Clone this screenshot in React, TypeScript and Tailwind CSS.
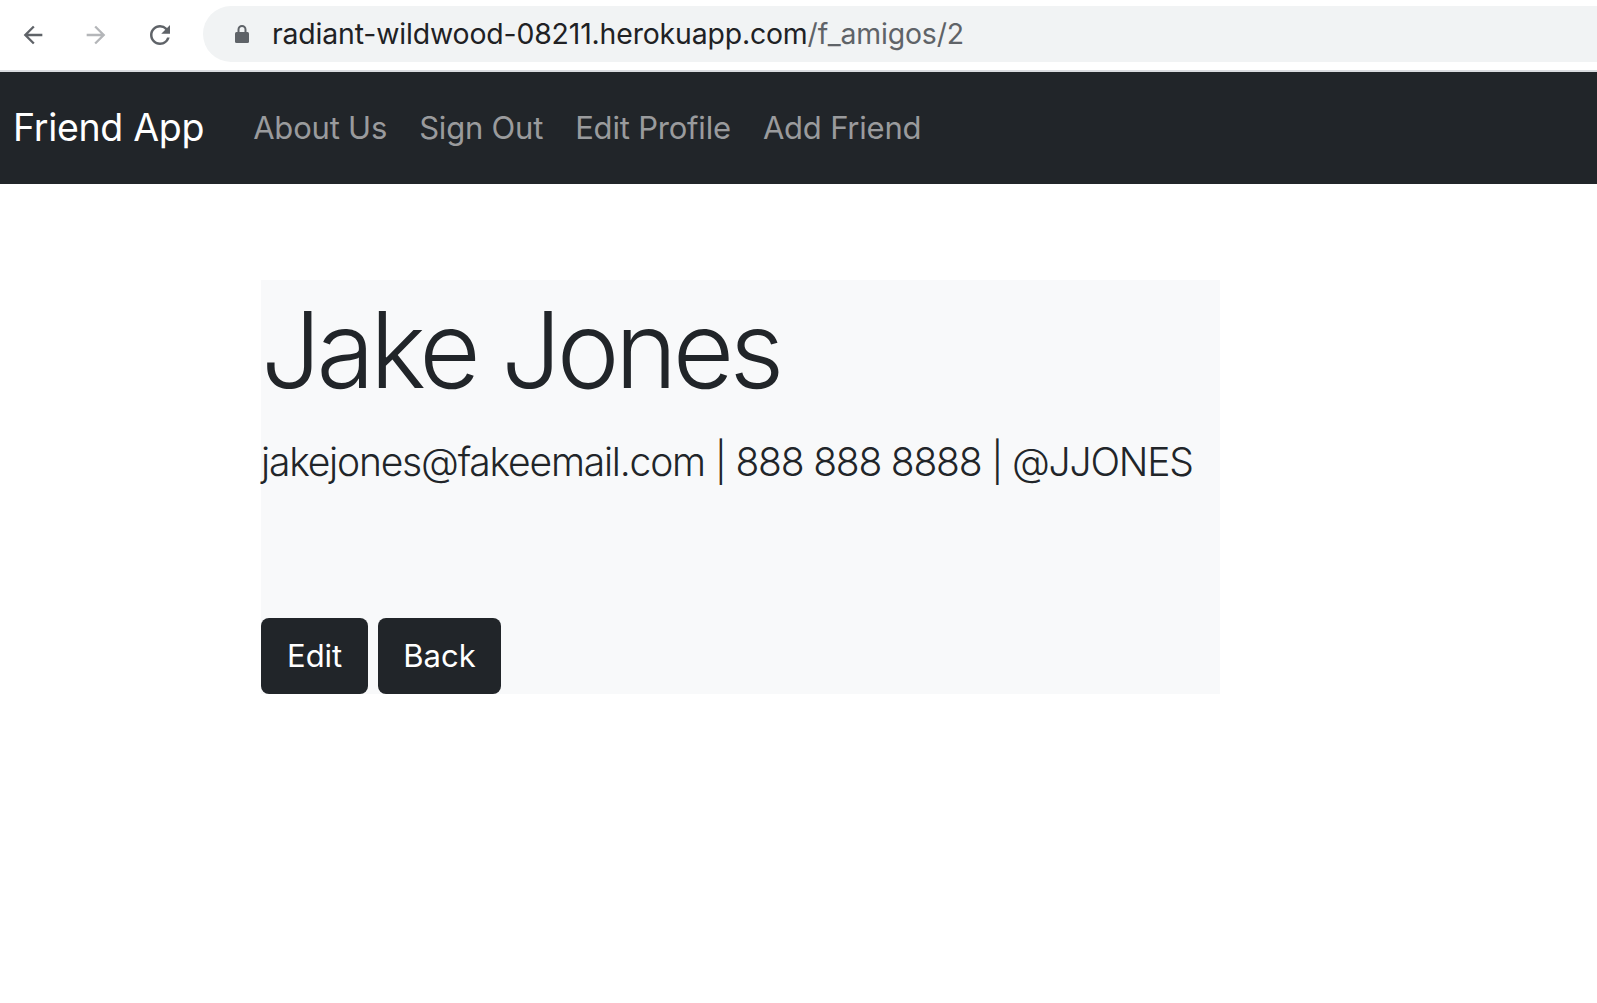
import React from "react";

function BackIcon({ color }: { color: string }) {
  return (
    <svg width="28" height="28" viewBox="0 0 24 24" fill={color}>
      <path d="M20 11H7.83l5.59-5.59L12 4l-8 8 8 8 1.41-1.41L7.83 13H20v-2z" />
    </svg>
  );
}

function ForwardIcon({ color }: { color: string }) {
  return (
    <svg width="28" height="28" viewBox="0 0 24 24" fill={color}>
      <path d="M12 4l-1.41 1.41L16.17 11H4v2h12.17l-5.58 5.59L12 20l8-8z" />
    </svg>
  );
}

function ReloadIcon({ color }: { color: string }) {
  return (
    <svg width="30" height="30" viewBox="0 0 24 24" fill={color}>
      <path d="M17.65 6.35A7.958 7.958 0 0 0 12 4c-4.42 0-7.99 3.58-7.99 8s3.57 8 7.99 8c3.73 0 6.84-2.55 7.73-6h-2.08A5.99 5.99 0 0 1 12 18c-3.31 0-6-2.69-6-6s2.69-6 6-6c1.66 0 3.14.69 4.22 1.78L13 11h7V4l-2.35 2.35z" />
    </svg>
  );
}

function LockIcon() {
  return (
    <svg width="16" height="20" viewBox="0 0 16 20" fill="#5f6368">
      <path d="M3.5 8V5.5a4.5 4.5 0 0 1 9 0V8h-2V5.5a2.5 2.5 0 0 0-5 0V8z" />
      <rect x="1" y="8" width="14" height="11" rx="1.5" />
    </svg>
  );
}

export default function App() {
  return (
    <div
      className="w-[1597px] h-[1003px] bg-white overflow-hidden"
      style={{ fontFamily: "Inter, 'Noto Sans', sans-serif" }}
    >
      {/* Browser chrome */}
      <div className="h-[70px] flex items-center bg-white">
        <div className="w-[203px] flex items-center pl-[19px] gap-[35px] h-full">
          <BackIcon color="#5f6368" />
          <ForwardIcon color="#b4b6b9" />
          <ReloadIcon color="#5f6368" />
        </div>
        <div className="flex-1 h-[56px] bg-[#f1f3f4] rounded-l-full flex items-center pl-[31px] self-start mt-[6px]">
          <LockIcon />
          <div className="ml-[22px] text-[28.4px] tracking-[-0.15px] text-[#202124]">
            radiant-wildwood-08211.herokuapp.com
            <span className="text-[#5f6368]">/f_amigos/2</span>
          </div>
        </div>
      </div>
      <div className="h-[2px] bg-[#dadce0]" />

      {/* Navbar */}
      <nav className="h-[112px] bg-[#212529] flex items-center pl-[13px]">
        <span className="text-white text-[37.5px] mr-[33px] tracking-[-0.3px]">Friend App</span>
        <div className="flex items-center text-[31px] text-[#9a9b9d] tracking-[-0.2px]">
          <span className="px-[16px]">About Us</span>
          <span className="px-[16px]">Sign Out</span>
          <span className="px-[16px]">Edit Profile</span>
          <span className="px-[16px]">Add Friend</span>
        </div>
      </nav>

      {/* Content */}
      <main className="pt-[96px] pl-[261px]">
        <div className="w-[959px] h-[414px] bg-[#f8f9fa] flex flex-col text-[#212529]">
          <h1 className="text-[106px] font-light leading-[1.2] mt-[6px] tracking-[-4.6px]">Jake Jones</h1>
          <p className="text-[39px] font-light leading-[1.5] mt-[20px] tracking-[-1.2px]">
            jakejones@fakeemail.com | 888 888 8888 | @JJONES
          </p>
          <div className="mt-auto flex gap-[10px]">
            <button className="h-[76px] px-[26px] bg-[#212529] text-white text-[31px] rounded-[8px]">Edit</button>
            <button className="h-[76px] px-[25px] bg-[#212529] text-white text-[31px] rounded-[8px]">Back</button>
          </div>
        </div>
      </main>
    </div>
  );
}
